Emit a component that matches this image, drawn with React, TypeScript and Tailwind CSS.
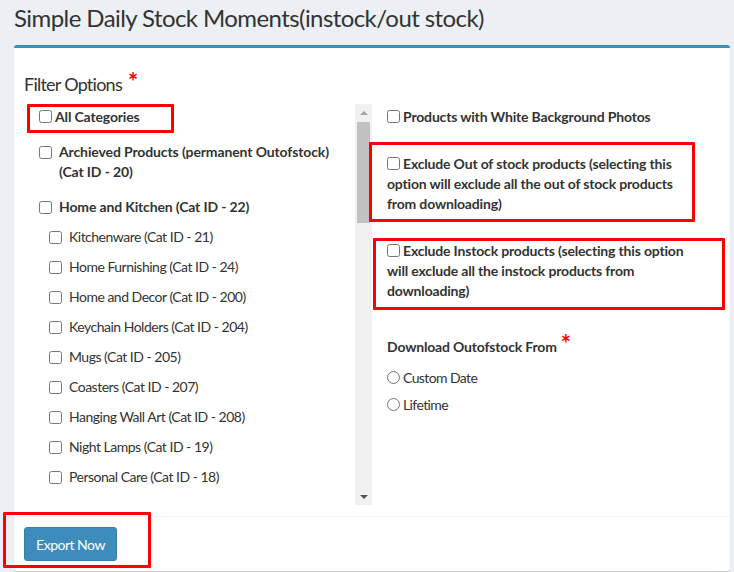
import React from "react";

const Cb = ({ className = "" }: { className?: string }) => (
  <input type="checkbox" className={"w-[13px] h-[13px] shrink-0 " + className} />
);

export default function App() {
  const children = [
    "Kitchenware (Cat ID - 21)",
    "Home Furnishing (Cat ID - 24)",
    "Home and Decor (Cat ID - 200)",
    "Keychain Holders (Cat ID - 204)",
    "Mugs (Cat ID - 205)",
    "Coasters (Cat ID - 207)",
    "Hanging Wall Art (Cat ID - 208)",
    "Night Lamps (Cat ID - 19)",
    "Personal Care (Cat ID - 18)",
  ];
  return (
    <div className="w-[734px] h-[572px] bg-[#ecf0f5] relative overflow-hidden font-[Lato,sans-serif] text-[#333]">
      <h1 className="pl-[14px] pt-[3px] h-[45px] text-[24px] leading-[30px] font-normal tracking-[-0.58px]">
        Simple Daily Stock Moments(instock/out stock)
      </h1>
      <div className="ml-[14px] mr-[4px] bg-white border-t-[3px] border-[#3c8dbc] rounded-[3px] shadow-[0_1px_1px_rgba(0,0,0,0.15)]">
        <div className="pb-[11px]">
          <div className="pt-[24px] pl-[10px] text-[18px] leading-[24px] flex items-start">
            <span className="tracking-[-0.75px]">Filter Options</span>
            <span className="text-[#ff0000] text-[24px] leading-[16px] ml-[6px] mt-[2px] font-bold">*</span>
          </div>
          <div className="flex mt-[8px]">
            <div className="ml-[10px] w-[348px] h-[401px] flex">
              <div className="flex-1 overflow-hidden pl-[15px] pt-[3px] text-[14px] leading-[20px] tracking-[-0.5px]">
                <label className="flex items-start font-bold tracking-[-0.15px]">
                  <Cb className="mt-[3px] mr-[3px]" />
                  <span>All Categories</span>
                </label>
                <label className="flex items-start font-bold mt-[15px] tracking-[-0.12px]">
                  <Cb className="mt-[4px] mr-[7px]" />
                  <span>
                    Archieved Products (permanent Outofstock)
                    <br />
                    (Cat ID - 20)
                  </span>
                </label>
                <label className="flex items-start font-bold mt-[15px] tracking-[-0.15px]">
                  <Cb className="mt-[4px] mr-[7px]" />
                  <span>Home and Kitchen (Cat ID - 22)</span>
                </label>
                {children.map((c) => (
                  <label key={c} className="flex items-start mt-[10px] pl-[10px]">
                    <Cb className="mt-[4px] mr-[7px]" />
                    <span>{c}</span>
                  </label>
                ))}
              </div>
              <div className="w-[17px] bg-[#f1f1f1] flex flex-col">
                <div className="h-[17px] flex items-center justify-center">
                  <div className="w-0 h-0 border-l-[4px] border-r-[4px] border-b-[4px] border-l-transparent border-r-transparent border-b-[#a3a3a3]" />
                </div>
                <div className="mx-[2px] mt-[1px] h-[101px] bg-[#c1c1c1]" />
                <div className="flex-1" />
                <div className="h-[17px] flex items-center justify-center">
                  <div className="w-0 h-0 border-l-[4px] border-r-[4px] border-t-[4px] border-l-transparent border-r-transparent border-t-[#505050]" />
                </div>
              </div>
            </div>
            <div className="flex-1 pl-[15px] pr-[10px] pt-[3px] text-[14px] leading-[20px] tracking-[-0.17px]">
              <label className="flex items-start font-bold">
                <Cb className="mt-[3px] mr-[3px]" />
                <span>Products with White Background Photos</span>
              </label>
              <p className="font-bold mt-[27px]">
                <input type="checkbox" className="w-[13px] h-[13px] align-[-1px] mr-[3px]" />
                Exclude Out of stock products (selecting this
                <br />
                option will exclude all the out of stock products
                <br />
                from downloading)
              </p>
              <p className="font-bold mt-[27px]">
                <input type="checkbox" className="w-[13px] h-[13px] align-[-1px] mr-[3px]" />
                Exclude Instock products (selecting this option
                <br />
                will exclude all the instock products from
                <br />
                downloading)
              </p>
              <div className="mt-[36px] flex items-start">
                <span className="font-bold">Download Outofstock From</span>
                <span className="text-[#ff0000] text-[24px] leading-[16px] ml-[4px] -mt-[1px] font-bold">*</span>
              </div>
              <label className="flex items-start mt-[11px] tracking-[-0.6px]">
                <input type="radio" name="dl" className="w-[13px] h-[13px] mt-[3px] mr-[3px] shrink-0" />
                <span>Custom Date</span>
              </label>
              <label className="flex items-start mt-[7px] tracking-[-0.6px]">
                <input type="radio" name="dl" className="w-[13px] h-[13px] mt-[3px] mr-[3px] shrink-0" />
                <span>Lifetime</span>
              </label>
            </div>
          </div>
        </div>
        <div className="border-t border-[#f4f4f4] p-[10px]">
          <button className="h-[34px] w-[93px] bg-[#3c8dbc] border border-[#367fa9] rounded-[3px] text-white text-[14px] tracking-[-0.5px]">
            Export Now
          </button>
        </div>
      </div>

      <div className="absolute left-[27px] top-[104px] w-[147px] h-[29px] border-[3px] border-[#ff0000] rounded-[1px]" />
      <div className="absolute left-[369px] top-[142px] w-[326px] h-[80px] border-[3px] border-[#ff0000] rounded-[1px]" />
      <div className="absolute left-[373px] top-[238px] w-[352px] h-[72px] border-[3px] border-[#ff0000] rounded-[1px]" />
      <div className="absolute left-[3px] top-[512px] w-[148px] h-[56px] border-[3px] border-[#ff0000] rounded-[1px]" />
    </div>
  );
}
